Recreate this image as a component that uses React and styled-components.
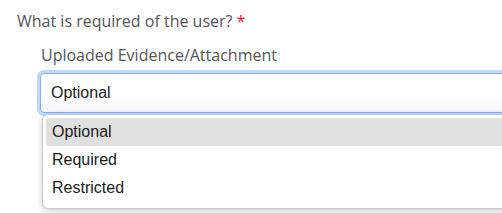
import React from "react";
import styled, { createGlobalStyle } from "styled-components";

const GlobalStyle = createGlobalStyle`
  html, body { margin: 0; padding: 0; background: #fff; }
  body { font-family: "Open Sans", "Liberation Sans", sans-serif; overflow: hidden; }
`;

const Page = styled.div`
  width: 502px;
  height: 213px;
  padding: 9px 0 0 17px;
  box-sizing: border-box;
  overflow: hidden;
`;

const Question = styled.div`
  font-size: 16px;
  line-height: 24px;
  color: #555;
`;

const Star = styled.span`
  color: #e8152b;
  margin-left: 4px;
`;

const Field = styled.div`
  padding-left: 23px;
  margin-top: 10px;
  display: flex;
  flex-direction: column;
`;

const FieldLabel = styled.div`
  font-size: 16px;
  line-height: 24px;
  color: #555;
  padding-left: 1px;
`;

const SelectWrap = styled.div`
  position: relative;
  margin-top: 6px;
  width: 480px;
`;

const SelectBox = styled.div`
  height: 38px;
  border: 1px solid #7fb0f0;
  border-radius: 4px;
  box-shadow: 0 0 0 3px #bdd8fb;
  background: linear-gradient(#fff 60%, #f4f4f4);
  display: flex;
  align-items: center;
  padding-left: 10px;
  font-family: "Liberation Sans", Arial, sans-serif;
  font-size: 16px;
  color: #1b1b1b;
`;

const Menu = styled.div`
  position: absolute;
  left: 2px;
  top: 41px;
  right: -20px;
  background: #fff;
  border: 1px solid #c8c8c8;
  border-radius: 6px;
  box-shadow: 0 2px 6px rgba(0, 0, 0, 0.2);
  padding: 3px 0 6px 3px;
`;

const Item = styled.div`
  height: 28px;
  display: flex;
  align-items: center;
  padding-left: 6px;
  font-family: "Liberation Sans", Arial, sans-serif;
  font-size: 16px;
  color: #1b1b1b;
  border-radius: 3px;
  background: ${p => (p.$active ? "#e0e0e0" : "transparent")};
`;

const options = ["Optional", "Required", "Restricted"];

export default function App() {
  return (
    <Page>
      <GlobalStyle />
      <Question>
        What is required of the user?<Star>*</Star>
      </Question>
      <Field>
        <FieldLabel>Uploaded Evidence/Attachment</FieldLabel>
        <SelectWrap>
          <SelectBox>Optional</SelectBox>
          <Menu>
            {options.map((o, i) => (
              <Item key={o} $active={i === 0}>{o}</Item>
            ))}
          </Menu>
        </SelectWrap>
      </Field>
    </Page>
  );
}
